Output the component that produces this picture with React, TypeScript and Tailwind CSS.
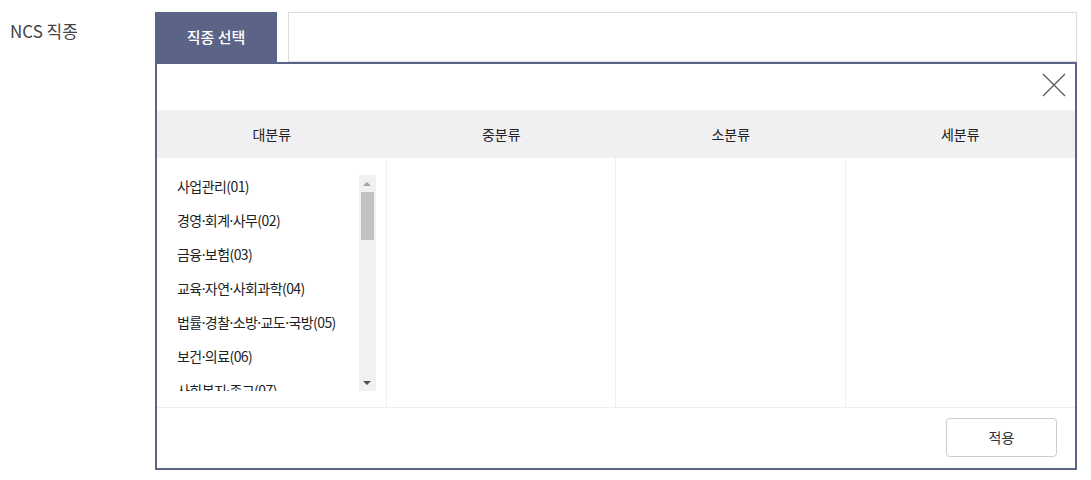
import { Fragment, useState } from 'react'

const FONT = { fontFamily: '"Noto Sans CJK KR", "Noto Sans", sans-serif' }
const DOT = { fontFamily: '"Noto Sans", sans-serif' }

const COLUMNS = ['대분류', '중분류', '소분류', '세분류'] as const

const CATEGORIES = [
  '사업관리(01)',
  '경영·회계·사무(02)',
  '금융·보험(03)',
  '교육·자연·사회과학(04)',
  '법률·경찰·소방·교도·국방(05)',
  '보건·의료(06)',
  '사회복지·종교(07)',
  '문화·예술·디자인·방송(08)',
  '운전·운송(09)',
  '영업판매(10)',
]

// the CJK middle dot is full width, use the latin one
function Label({ text }: { text: string }) {
  const parts = text.split('·')
  return (
    <>
      {parts.map((p, i) => (
        <Fragment key={i}>
          {i > 0 && (
            <span className="leading-none" style={DOT}>
              ·
            </span>
          )}
          {p}
        </Fragment>
      ))}
    </>
  )
}

// classic scrollbar look, headless chrome doesn't paint one
function FakeScrollbar() {
  return (
    <div className="flex w-[17px] shrink-0 flex-col items-center bg-[#f1f1f1]">
      <div className="flex h-[17px] w-full items-center justify-center">
        <span className="h-0 w-0 border-x-4 border-b-4 border-x-transparent border-b-[#a3a3a3]" />
      </div>
      <div className="h-[48px] w-[13px] bg-[#c1c1c1]" />
      <div className="flex-1" />
      <div className="flex h-[17px] w-full items-center justify-center">
        <span className="h-0 w-0 border-x-4 border-t-4 border-x-transparent border-t-[#505050]" />
      </div>
    </div>
  )
}

export default function App() {
  const [picked, setPicked] = useState<string | null>(null)

  return (
    <div className="flex h-[480px] w-[1091px] bg-white text-[#333]" style={FONT}>
      <div className="w-[155px] shrink-0 pl-[10px] pt-[19px] text-[17px] leading-6 text-[#444]">NCS 직종</div>

      <div className="mt-3 flex w-[922px] flex-col">
        <div className="flex h-[50px] gap-[11px]">
          <button className="w-[122px] bg-[#5b6386] text-[15px] font-medium text-white">직종 선택</button>
          <input
            readOnly
            value={picked ?? ''}
            className="flex-1 border border-[#ddd] px-3 text-[14px] outline-none"
          />
        </div>

        <div className="flex h-[408px] flex-col border-2 border-[#5b6386]">
          <div className="flex h-[46px] justify-end pr-[9px] pt-[9px]">
            <button aria-label="닫기" className="h-6 w-6">
              <svg viewBox="0 0 24 24" className="h-6 w-6" fill="none" stroke="#555" strokeWidth="1.2">
                <path d="M1 1 L23 23 M23 1 L1 23" />
              </svg>
            </button>
          </div>

          <div className="grid h-[48px] grid-cols-4 bg-[#f0f0f2]">
            {COLUMNS.map((c) => (
              <div key={c} className="flex items-center justify-center text-[14px] text-[#222]">
                {c}
              </div>
            ))}
          </div>

          <div className="grid h-[250px] grid-cols-4 border-b border-[#eee]">
            <div className="border-r border-[#eee] pb-[17px] pl-5 pr-[10px] pt-[17px]">
              <div className="flex h-[216px]">
                <ul className="flex-1 overflow-hidden">
                  {CATEGORIES.map((c) => (
                    <li
                      key={c}
                      onClick={() => setPicked(c)}
                      className="mb-3 h-[22px] cursor-pointer whitespace-nowrap text-[14px] leading-[22px] tracking-[-0.04em] text-[#222]"
                    >
                      <Label text={c} />
                    </li>
                  ))}
                </ul>
                <FakeScrollbar />
              </div>
            </div>
            <div className="border-r border-[#eee]" />
            <div className="border-r border-[#eee]" />
            <div />
          </div>

          <div className="flex flex-1 justify-end pr-[18px] pt-[10px]">
            <button className="h-[39px] w-[111px] rounded-[4px] border border-[#ccc] bg-white text-[14px] text-[#333]">
              적용
            </button>
          </div>
        </div>
      </div>
    </div>
  )
}
